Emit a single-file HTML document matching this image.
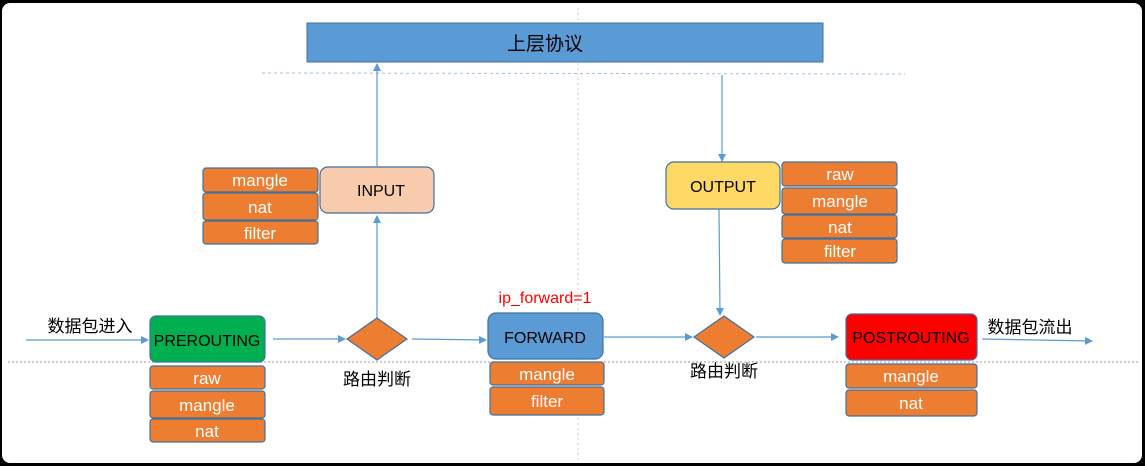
<!DOCTYPE html>
<html><head><meta charset="utf-8"><style>
html,body{margin:0;padding:0;background:#000;}
svg{display:block}
text{font-family:"Liberation Sans","Noto Sans CJK SC",sans-serif;}
</style></head><body>
<svg width="1145" height="466" viewBox="0 0 1145 466" xmlns="http://www.w3.org/2000/svg">
<defs>
<marker id="a" markerWidth="8" markerHeight="8" refX="7" refY="4" orient="auto" markerUnits="userSpaceOnUse">
<path d="M0,0 L8,4 L0,8 z" fill="#5b9bd5"/></marker>
</defs>
<rect x="2" y="3" width="1140" height="460" rx="8" fill="#fff"/>
<line x1="578" y1="8" x2="578" y2="460" stroke="#ccc" stroke-dasharray="2,3"/>
<line x1="262" y1="73" x2="905" y2="74" stroke="#9dc3e6" stroke-dasharray="3,3"/>
<line x1="8" y1="362" x2="1140" y2="362" stroke="#999" stroke-dasharray="2,2"/>
<rect x="307" y="23" width="516" height="39" fill="#5b9bd5" stroke="#41719c"/>
<text x="545" y="50" font-size="19" text-anchor="middle" fill="#000">上层协议</text>
<g stroke="#5b9bd5" stroke-width="1.2" fill="none" marker-end="url(#a)">
<line x1="377" y1="318" x2="377" y2="216"/>
<line x1="377" y1="166" x2="377" y2="64"/>
<line x1="722" y1="75" x2="722" y2="161"/>
<line x1="719" y1="209" x2="720" y2="315"/>
<line x1="26" y1="340" x2="148" y2="340"/>
<line x1="273" y1="339" x2="345" y2="339"/>
<line x1="412" y1="339" x2="486" y2="340"/>
<line x1="604" y1="337" x2="692" y2="337"/>
<line x1="756" y1="337" x2="838" y2="337"/>
<line x1="982" y1="339" x2="1092" y2="341"/>
</g>
<g stroke="#41719c" stroke-width="1.2">
<rect x="320" y="167" width="114" height="46" rx="8" fill="#f8cbad"/>
<rect x="666" y="162" width="114" height="47" rx="8" fill="#ffd966"/>
<rect x="150" y="316" width="115" height="46" rx="6" fill="#00b050"/>
<rect x="488" y="313" width="115" height="46" rx="8" fill="#5b9bd5"/>
<rect x="846" y="314" width="131" height="46" rx="6" fill="#ff0000"/>
<polygon points="377,318 407,339 377,360 347,339" fill="#ed7d31"/>
<polygon points="724,316 754,337 724,358 694,337" fill="#ed7d31"/>
</g>
<g font-size="16" fill="#000" text-anchor="middle">
<text x="381" y="196">INPUT</text>
<text x="723" y="192">OUTPUT</text>
<text x="207" y="346">PREROUTING</text>
<text x="545" y="343">FORWARD</text>
<text x="911" y="343">POSTROUTING</text>
</g>
<g font-size="17" fill="#000" text-anchor="middle">
<text x="377" y="385">路由判断</text>
<text x="724" y="377">路由判断</text>
<text x="90" y="332">数据包进入</text>
<text x="1030" y="333">数据包流出</text>
</g>
<text x="545" y="303" font-size="16" fill="#ff0000" text-anchor="middle">ip_forward=1</text>
<g stroke="#41719c" stroke-width="1.2" fill="#ed7d31">
<rect x="203" y="168" width="115" height="24" rx="3"/>
<rect x="203" y="193" width="115" height="27" rx="3"/>
<rect x="203" y="221" width="115" height="23" rx="3"/>
<rect x="782" y="162" width="115" height="24" rx="3"/>
<rect x="782" y="188" width="115" height="26" rx="3"/>
<rect x="782" y="215" width="115" height="23" rx="3"/>
<rect x="782" y="239" width="115" height="24" rx="3"/>
<rect x="150" y="366" width="115" height="23" rx="3"/>
<rect x="150" y="391" width="115" height="27" rx="3"/>
<rect x="150" y="419" width="115" height="23" rx="3"/>
<rect x="490" y="362" width="114" height="23" rx="3"/>
<rect x="490" y="387" width="114" height="28" rx="3"/>
<rect x="846" y="364" width="131" height="24" rx="3"/>
<rect x="846" y="390" width="131" height="26" rx="3"/>
</g>
<g font-size="17" fill="#fff" text-anchor="middle">
<text x="260" y="186">mangle</text>
<text x="260" y="213">nat</text>
<text x="260" y="239">filter</text>
<text x="840" y="180">raw</text>
<text x="840" y="207">mangle</text>
<text x="840" y="233">nat</text>
<text x="840" y="257">filter</text>
<text x="207" y="384">raw</text>
<text x="207" y="411">mangle</text>
<text x="207" y="437">nat</text>
<text x="547" y="380">mangle</text>
<text x="547" y="407">filter</text>
<text x="911" y="382">mangle</text>
<text x="911" y="409">nat</text>
</g>
</svg>
</body></html>
